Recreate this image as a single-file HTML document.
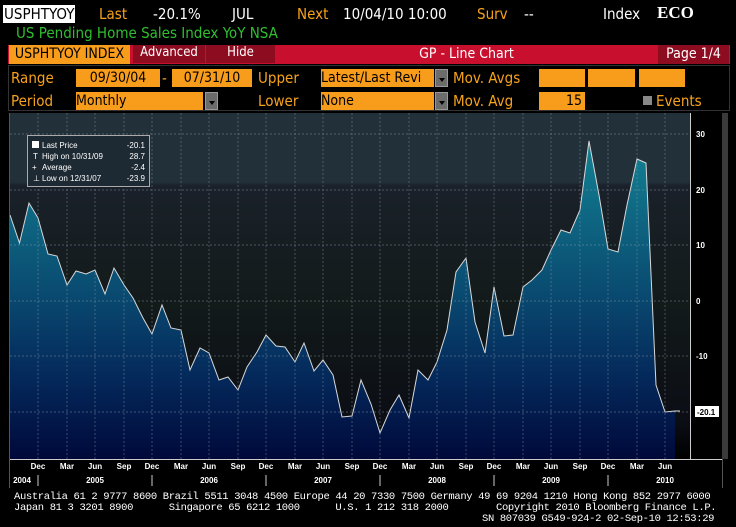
<!DOCTYPE html>
<html><head><meta charset="utf-8"><style>
body{margin:0;background:#000;width:736px;height:527px;overflow:hidden;font-family:"DejaVu Sans Condensed","Liberation Sans",Arial,sans-serif}
.t{position:absolute;white-space:pre;font-size:15px;line-height:18px}
.o{color:#f7a21b}.w{color:#fff}.g{color:#2fbf2f}
.box{position:absolute;background:#f89c1c;color:#000;font-size:14px;line-height:18px;height:18px;white-space:pre;overflow:hidden}
.dd{position:absolute;width:13px;height:18px;background:#6c6c6c;border:1px solid #999;box-sizing:border-box}
.dd:after{content:"";position:absolute;left:3px;top:8px;border:3px solid transparent;border-top:4px solid #000}
.ft{position:absolute;color:#fff;font-family:"Liberation Mono",monospace;font-size:10.5px;line-height:13px;white-space:pre;letter-spacing:-0.35px}
</style></head><body>
<div class="t" style="left:3px;top:5px;background:#fff;color:#000;padding:0 1px">USPHTYOY</div>
<div class="t o" style="left:99px;top:5px">Last</div>
<div class="t w" style="left:153px;top:5px">-20.1%</div>
<div class="t w" style="left:232px;top:5px">JUL</div>
<div class="t o" style="left:297px;top:5px">Next</div>
<div class="t w" style="left:343px;top:5px">10/04/10 10:00</div>
<div class="t o" style="left:477px;top:5px">Surv</div>
<div class="t w" style="left:524px;top:5px">--</div>
<div class="t w" style="left:603px;top:5px">Index</div>
<div class="t w" style="left:657px;top:4px;font-family:'Liberation Serif',serif;font-weight:bold;font-size:17px">ECO</div>
<div class="t g" style="left:16px;top:24px">US Pending Home Sales Index YoY NSA</div>
<div style="position:absolute;left:8px;top:45px;width:722px;height:19px;background:#c8102e"></div>
<div style="position:absolute;left:9px;top:45px;width:121px;height:19px;background:#f89c1c;color:#000;font-size:14px;line-height:19px;text-align:center">USPHTYOY INDEX</div>
<div style="position:absolute;left:133px;top:45px;width:72px;height:18px;background:#8e0c20;color:#fff;font-size:13px;line-height:16px;text-align:center">Advanced</div>
<div style="position:absolute;left:206px;top:45px;width:69px;height:18px;background:#8e0c20;color:#fff;font-size:13px;line-height:16px;text-align:center">Hide</div>
<div style="position:absolute;left:276px;top:45px;width:381px;height:19px;color:#fff;font-size:14px;line-height:19px;text-align:center">GP - Line Chart</div>
<div style="position:absolute;left:658px;top:45px;width:71px;height:19px;background:#8e0c20;color:#fff;font-size:14px;line-height:19px;text-align:center">Page 1/4</div>
<div style="position:absolute;left:8px;top:65px;width:722px;height:46px;border:1px solid #333;box-sizing:border-box"></div>
<div class="t o" style="left:11px;top:69px">Range</div>
<div class="box" style="left:76px;top:69px;width:84px;text-align:center">09/30/04</div>
<div class="t o" style="left:162px;top:69px">-</div>
<div class="box" style="left:172px;top:69px;width:80px;text-align:center">07/31/10</div>
<div class="t o" style="left:258px;top:69px">Upper</div>
<div class="box" style="left:321px;top:69px;width:113px">Latest/Last Revi</div>
<div class="dd" style="left:435px;top:69px"></div>
<div class="t o" style="left:453px;top:69px">Mov. Avgs</div>
<div class="box" style="left:539px;top:69px;width:46px"></div>
<div class="box" style="left:588px;top:69px;width:47px"></div>
<div class="box" style="left:639px;top:69px;width:46px"></div>
<div class="t o" style="left:11px;top:92px">Period</div>
<div class="box" style="left:76px;top:92px;width:127px">Monthly</div>
<div class="dd" style="left:205px;top:92px"></div>
<div class="t o" style="left:258px;top:92px">Lower</div>
<div class="box" style="left:321px;top:92px;width:113px">None</div>
<div class="dd" style="left:435px;top:92px"></div>
<div class="t o" style="left:453px;top:92px">Mov. Avg</div>
<div class="box" style="left:539px;top:92px;width:46px;text-align:right;padding-right:3px;box-sizing:border-box">15</div>
<div style="position:absolute;left:643px;top:96px;width:9px;height:9px;background:#888"></div>
<div class="t o" style="left:656px;top:92px">Events</div>

<svg style="position:absolute;left:0;top:0" width="736" height="527">
<defs>
<linearGradient id="bg" x1="0" y1="113" x2="0" y2="459" gradientUnits="userSpaceOnUse">
<stop offset="0" stop-color="#223039"/><stop offset="0.2" stop-color="#223039"/><stop offset="0.21" stop-color="#1a212a"/><stop offset="0.55" stop-color="#121a1a"/><stop offset="0.9" stop-color="#0b0d14"/><stop offset="1" stop-color="#000"/>
</linearGradient>
<linearGradient id="fl" x1="0" y1="140" x2="0" y2="459" gradientUnits="userSpaceOnUse">
<stop offset="0" stop-color="#138293"/><stop offset="0.45" stop-color="#0a4e73"/><stop offset="0.75" stop-color="#04285a"/><stop offset="1" stop-color="#00093a"/>
</linearGradient>
</defs>
<rect x="10" y="113" width="681" height="346" fill="url(#bg)"/>
<rect x="722" y="113" width="6" height="346" fill="#3a3a3a"/>
<polygon fill="url(#fl)" points="10,459 10,215 19.5,243 29,203 38,218 48,254 57,256 67,285 76,271 86,274 95,270 105,294 114,268 124,285 133,298 143,318 152,334 162,305 171,328 181,330 190,370 200,348 209,353 219,380 228,377 238,390 247,367 257,352 266,335 276,346 285,347 295,362 304,343 314,371 323,360 333,375 342,417 352,416 361,380 371,404 380,433 390,410 399,395 409,418 418,370 428,380 437,362 447,330 456,272 466,258 475,322 485,353 494,287 504,336 513,335 523,287 532,280 542,270 551,250 561,230 570,233 580,210 589,141 599,195 608,249 618,252 627,205 637,159 646,163 656,385 665,412 675,411 675,459"/>
<polyline fill="none" stroke="#d8d8d8" stroke-width="1" points="10,215 19.5,243 29,203 38,218 48,254 57,256 67,285 76,271 86,274 95,270 105,294 114,268 124,285 133,298 143,318 152,334 162,305 171,328 181,330 190,370 200,348 209,353 219,380 228,377 238,390 247,367 257,352 266,335 276,346 285,347 295,362 304,343 314,371 323,360 333,375 342,417 352,416 361,380 371,404 380,433 390,410 399,395 409,418 418,370 428,380 437,362 447,330 456,272 466,258 475,322 485,353 494,287 504,336 513,335 523,287 532,280 542,270 551,250 561,230 570,233 580,210 589,141 599,195 608,249 618,252 627,205 637,159 646,163 656,385 665,412 675,411 680,411"/>
<g stroke="#8a9aa8" stroke-width="0.7" stroke-dasharray="2,2" opacity="0.6">
<line x1="10" y1="134" x2="690" y2="134"/><line x1="10" y1="190" x2="690" y2="190"/><line x1="10" y1="245" x2="690" y2="245"/><line x1="10" y1="301" x2="690" y2="301"/><line x1="10" y1="356" x2="690" y2="356"/><line x1="10" y1="412" x2="690" y2="412"/>
<line x1="38" y1="113" x2="38" y2="459"/><line x1="67" y1="113" x2="67" y2="459"/><line x1="95" y1="113" x2="95" y2="459"/><line x1="124" y1="113" x2="124" y2="459"/><line x1="152" y1="113" x2="152" y2="459"/><line x1="181" y1="113" x2="181" y2="459"/><line x1="209" y1="113" x2="209" y2="459"/><line x1="238" y1="113" x2="238" y2="459"/><line x1="266" y1="113" x2="266" y2="459"/><line x1="295" y1="113" x2="295" y2="459"/><line x1="323" y1="113" x2="323" y2="459"/><line x1="352" y1="113" x2="352" y2="459"/><line x1="380" y1="113" x2="380" y2="459"/><line x1="409" y1="113" x2="409" y2="459"/><line x1="437" y1="113" x2="437" y2="459"/><line x1="466" y1="113" x2="466" y2="459"/><line x1="494" y1="113" x2="494" y2="459"/><line x1="523" y1="113" x2="523" y2="459"/><line x1="551" y1="113" x2="551" y2="459"/><line x1="580" y1="113" x2="580" y2="459"/><line x1="608" y1="113" x2="608" y2="459"/><line x1="637" y1="113" x2="637" y2="459"/><line x1="665" y1="113" x2="665" y2="459"/>
</g>
<line x1="690.5" y1="113" x2="690.5" y2="459" stroke="#ccc"/>
<line x1="10" y1="459.5" x2="722" y2="459.5" stroke="#ccc"/>
<line x1="9.5" y1="113" x2="9.5" y2="488" stroke="#555"/>
<line x1="722.5" y1="459" x2="722.5" y2="488" stroke="#555"/>
<g fill="#fff" font-family="Liberation Sans,sans-serif" font-size="8" font-weight="bold">
<text x="696" y="137">30</text><text x="696" y="193">20</text><text x="696" y="248">10</text><text x="696" y="304">0</text><text x="696" y="359">-10</text>
</g>
<rect x="695" y="406" width="24" height="11" fill="#fff"/>
<text x="697" y="415" fill="#000" font-family="Liberation Sans,sans-serif" font-size="8" font-weight="bold">-20.1</text>
<g fill="#fff" font-family="Liberation Sans,sans-serif" font-size="8" font-weight="bold" text-anchor="middle">
<text x="38" y="469">Dec</text><text x="67" y="469">Mar</text><text x="95" y="469">Jun</text><text x="124" y="469">Sep</text><text x="152" y="469">Dec</text><text x="181" y="469">Mar</text><text x="209" y="469">Jun</text><text x="238" y="469">Sep</text><text x="266" y="469">Dec</text><text x="295" y="469">Mar</text><text x="323" y="469">Jun</text><text x="352" y="469">Sep</text><text x="380" y="469">Dec</text><text x="409" y="469">Mar</text><text x="437" y="469">Jun</text><text x="466" y="469">Sep</text><text x="494" y="469">Dec</text><text x="523" y="469">Mar</text><text x="551" y="469">Jun</text><text x="580" y="469">Sep</text><text x="608" y="469">Dec</text><text x="637" y="469">Mar</text><text x="665" y="469">Jun</text>
<text x="22" y="483">2004</text><text x="95" y="483">2005</text><text x="209" y="483">2006</text><text x="323" y="483">2007</text><text x="437" y="483">2008</text><text x="551" y="483">2009</text><text x="665" y="483">2010</text>
</g>
<g stroke="#ccc"><line x1="38" y1="475" x2="38" y2="486"/><line x1="152" y1="475" x2="152" y2="486"/><line x1="266" y1="475" x2="266" y2="486"/><line x1="380" y1="475" x2="380" y2="486"/><line x1="494" y1="475" x2="494" y2="486"/><line x1="608" y1="475" x2="608" y2="486"/></g>
<rect x="27.5" y="135.5" width="122" height="51" fill="#1d2a33" stroke="#aaa"/>
<rect x="32" y="141" width="7" height="7" fill="#fff"/>
<g fill="#fff" font-family="Liberation Sans,sans-serif" font-size="8">
<text x="42" y="148">Last Price</text><text x="145" y="148" text-anchor="end">-20.1</text>
<text x="33" y="159">T</text><text x="42" y="159">High on 10/31/09</text><text x="145" y="159" text-anchor="end">28.7</text>
<text x="32" y="170">+</text><text x="42" y="170">Average</text><text x="145" y="170" text-anchor="end">-2.4</text>
<text x="33" y="181">⊥</text><text x="42" y="181">Low on 12/31/07</text><text x="145" y="181" text-anchor="end">-23.9</text>
</g>
</svg>
<div class="ft" style="left:14px;top:491px">Australia 61 2 9777 8600 Brazil 5511 3048 4500 Europe 44 20 7330 7500 Germany 49 69 9204 1210 Hong Kong 852 2977 6000</div>
<div class="ft" style="left:14px;top:502px">Japan 81 3 3201 8900      Singapore 65 6212 1000      U.S. 1 212 318 2000        Copyright 2010 Bloomberg Finance L.P.</div>
<div class="ft" style="left:482px;top:513px">SN 807039 G549-924-2 02-Sep-10 12:53:29</div>
</body></html>
